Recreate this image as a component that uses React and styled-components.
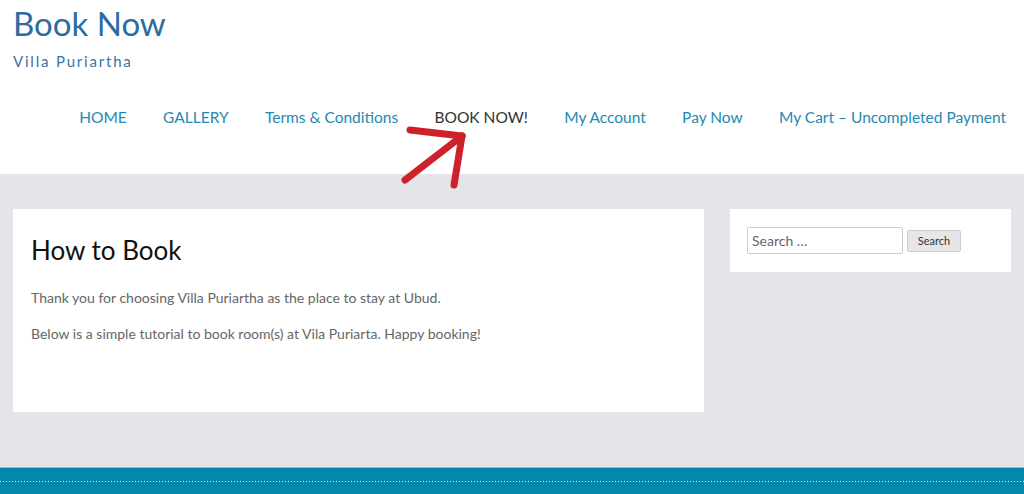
import React from 'react'
import styled, { createGlobalStyle } from 'styled-components'

const Global = createGlobalStyle`
  html, body {
    margin: 0;
    padding: 0;
    background: #e4e5e9;
    font-family: Lato, "Open Sans", sans-serif;
  }
`

const Page = styled.div`
  width: 1024px;
  height: 494px;
  overflow: hidden;
  display: flex;
  flex-direction: column;
`

const Header = styled.header`
  position: relative;
  background: #fff;
  height: 174px;
  box-sizing: border-box;
  padding: 3px 18px 0 13px;
`

const SiteTitle = styled.h1`
  margin: 0;
  font-size: 33px;
  font-weight: 400;
  line-height: 40px;
  color: #2b6ca3;
`

const Tagline = styled.div`
  margin-top: 9px;
  font-size: 15px;
  letter-spacing: 1.8px;
  color: #3a73a6;
`

const Nav = styled.nav`
  display: flex;
  justify-content: flex-end;
  gap: 36.3px;
  margin-top: 37px;
`

const NavLink = styled.a`
  font-size: 15.5px;
  line-height: 20px;
  color: ${p => (p.$active ? '#333' : '#2389b3')};
  text-decoration: none;
`

const Arrow = styled.svg`
  position: absolute;
  left: 398px;
  top: 126px;
`

const Main = styled.main`
  flex: 1;
  display: flex;
  align-items: flex-start;
  gap: 26px;
  padding: 35px 13px 0 13px;
`

const Card = styled.section`
  background: #fff;
  width: 691px;
  height: 203px;
  box-sizing: border-box;
  padding: 26px 18px;
`

const CardTitle = styled.h2`
  margin: 0 0 24px;
  font-size: 26px;
  font-weight: 400;
  line-height: 30px;
  color: #111;
`

const Text = styled.p`
  margin: 0 0 18px;
  font-size: 14px;
  line-height: 18px;
  color: #666;
`

const Widget = styled.aside`
  background: #fff;
  width: 281px;
  height: 63px;
  box-sizing: border-box;
  padding: 18px 17px;
  display: flex;
  align-items: center;
  gap: 4px;
`

const SearchInput = styled.input`
  width: 156px;
  height: 27px;
  box-sizing: border-box;
  border: 1px solid #ccc;
  border-radius: 2px;
  padding: 0 4px;
  font-family: Lato, sans-serif;
  font-size: 14px;
  color: #555;
  &::placeholder {
    color: #666;
  }
`

const SearchButton = styled.button`
  width: 54px;
  height: 22px;
  border: 1px solid #ccc;
  border-radius: 2px;
  background: #e6e6e6;
  font-family: Lato, sans-serif;
  font-size: 11px;
  color: #333;
  padding: 0;
`

const Footer = styled.footer`
  height: 27px;
  background: #0487aa;
  border-top: 1px solid #7fc6dc;
  padding-top: 13px;
  box-sizing: border-box;
`

const Dots = styled.div`
  height: 1px;
  background-image: linear-gradient(to right, rgba(255, 255, 255, 0.85) 50%, transparent 50%);
  background-size: 3px 1px;
`

const links = [
  'HOME',
  'GALLERY',
  'Terms & Conditions',
  'BOOK NOW!',
  'My Account',
  'Pay Now',
  'My Cart – Uncompleted Payment',
]

export default function App() {
  return (
    <Page>
      <Global />
      <Header>
        <SiteTitle>Book Now</SiteTitle>
        <Tagline>Villa Puriartha</Tagline>
        <Nav>
          {links.map(l => (
            <NavLink key={l} href="#" $active={l === 'BOOK NOW!'}>{l}</NavLink>
          ))}
        </Nav>
        <Arrow width="72" height="68" viewBox="0 0 72 68">
          <g stroke="#d0202b" strokeWidth="7" strokeLinecap="round" fill="none">
            <line x1="7" y1="54" x2="64" y2="10" />
            <line x1="12" y1="4" x2="64" y2="10" />
            <line x1="64" y1="10" x2="56" y2="59" />
          </g>
        </Arrow>
      </Header>
      <Main>
        <Card>
          <CardTitle>How to Book</CardTitle>
          <Text>Thank you for choosing Villa Puriartha as the place to stay at Ubud.</Text>
          <Text>Below is a simple tutorial to book room(s) at Vila Puriarta. Happy booking!</Text>
        </Card>
        <Widget>
          <SearchInput placeholder="Search …" />
          <SearchButton>Search</SearchButton>
        </Widget>
      </Main>
      <Footer>
        <Dots />
      </Footer>
    </Page>
  )
}
